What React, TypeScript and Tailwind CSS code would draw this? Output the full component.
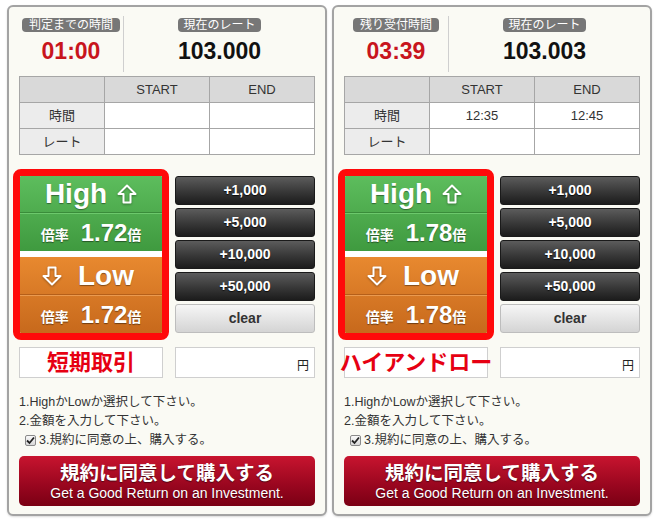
import React from "react";

interface PanelData {
  timeLabel: string;
  time: string;
  rate: string;
  start: string;
  end: string;
  mult: string;
  name: string;
}

const panels: PanelData[] = [
  { timeLabel: "判定までの時間", time: "01:00", rate: "103.000", start: "", end: "", mult: "1.72", name: "短期取引" },
  { timeLabel: "残り受付時間", time: "03:39", rate: "103.003", start: "12:35", end: "12:45", mult: "1.78", name: "ハイアンドロー" },
];

const amounts = ["+1,000", "+5,000", "+10,000", "+50,000"];

function ArrowUp() {
  return (
    <svg width="20" height="20" viewBox="0 0 20 20" className="drop-shadow-[0_1px_1px_rgba(0,0,0,0.35)]">
      <path d="M10 1.5 L18.5 10 L13.5 10 L13.5 18.5 L6.5 18.5 L6.5 10 L1.5 10 Z" fill="none" stroke="#fff" strokeWidth="2" strokeLinejoin="round" />
    </svg>
  );
}

function ArrowDown() {
  return (
    <svg width="20" height="20" viewBox="0 0 20 20" className="drop-shadow-[0_1px_1px_rgba(0,0,0,0.35)]">
      <path d="M10 18.5 L18.5 10 L13.5 10 L13.5 1.5 L6.5 1.5 L6.5 10 L1.5 10 Z" fill="none" stroke="#fff" strokeWidth="2" strokeLinejoin="round" />
    </svg>
  );
}

function RateRow({ mult }: { mult: string }) {
  return (
    <div className="h-[37px] flex items-center justify-center text-white font-bold [text-shadow:0_1px_1px_rgba(0,0,0,0.45)]">
      <span className="text-[14px] mr-[12px] mt-[6px]">倍率</span>
      <span className="text-[24px] leading-none">{mult}</span>
      <span className="text-[14px] mt-[6px]">倍</span>
    </div>
  );
}

function Panel({ p }: { p: PanelData }) {
  return (
    <div className="w-[320px] h-[511px] border-2 border-[#a3a3a3] rounded-[6px] bg-[#fafaf4] px-[10px] pt-[9px] shadow-[0_1px_2px_rgba(0,0,0,0.15)]">
      {/* header */}
      <div className="flex h-[56px]">
        <div className="w-[104px] flex flex-col items-center">
          <span className="mt-[2px] h-[14px] px-[7px] rounded-[4px] bg-[#777] text-white text-[12px] leading-[14px]">{p.timeLabel}</span>
          <span className="mt-[6px] text-[23px] leading-[26px] font-bold text-[#c8151d]">{p.time}</span>
        </div>
        <div className="w-px bg-[#cfcfcf]" />
        <div className="flex-1 flex flex-col items-center">
          <span className="mt-[2px] h-[14px] px-[5px] rounded-[4px] bg-[#777] text-white text-[12px] leading-[14px]">現在のレート</span>
          <span className="mt-[6px] text-[23px] leading-[26px] font-bold text-[#111]">{p.rate}</span>
        </div>
      </div>

      {/* table */}
      <table className="mt-[4px] w-full border-collapse text-[13px] text-[#333] table-fixed">
        <tbody>
          <tr className="h-[26px] bg-[#d9d9d9]">
            <td className="w-[85px] border border-[#a6a6a6]" />
            <td className="w-[105px] border border-[#a6a6a6] text-center">START</td>
            <td className="border border-[#a6a6a6] text-center">END</td>
          </tr>
          <tr className="h-[26px]">
            <td className="border border-[#a6a6a6] bg-[#ececec] text-center">時間</td>
            <td className="border border-[#a6a6a6] bg-white text-center">{p.start}</td>
            <td className="border border-[#a6a6a6] bg-white text-center">{p.end}</td>
          </tr>
          <tr className="h-[26px]">
            <td className="border border-[#a6a6a6] bg-[#ececec] text-center">レート</td>
            <td className="border border-[#a6a6a6] bg-white" />
            <td className="border border-[#a6a6a6] bg-white" />
          </tr>
        </tbody>
      </table>

      {/* high / low + amounts */}
      <div className="mt-[14px] flex gap-[12px]">
        <div className="w-[144px]">
          <div className="-mx-[6px] border-[7px] border-[#ff0a0a] rounded-[8px] bg-white overflow-hidden">
            <div className="bg-gradient-to-b from-[#5dbd5d] to-[#3f9a3f]">
              <div className="h-[37px] flex items-center justify-center gap-[10px] border-b border-[#3a8c3a] text-white font-bold text-[28px] leading-none [text-shadow:0_1px_1px_rgba(0,0,0,0.4)]">
                <span>High</span>
                <ArrowUp />
              </div>
              <div className="border-t border-[#6cc86c]">
                <RateRow mult={p.mult} />
              </div>
            </div>
            <div className="h-[6px] bg-white" />
            <div className="bg-gradient-to-b from-[#e8892f] to-[#c7691c]">
              <div className="h-[38px] flex items-center justify-center gap-[16px] pr-[6px] border-b border-[#b55f19] text-white font-bold text-[28px] leading-none [text-shadow:0_1px_1px_rgba(0,0,0,0.4)]">
                <ArrowDown />
                <span>Low</span>
              </div>
              <div className="border-t border-[#eb9a4f]">
                <RateRow mult={p.mult} />
              </div>
            </div>
          </div>
        </div>
        <div className="flex-1 pt-[7px] flex flex-col gap-[3px]">
          {amounts.map((a) => (
            <div
              key={a}
              className="h-[29px] rounded-[3px] border border-[#1a1a1a] bg-gradient-to-b from-[#5c5c5c] to-[#1c1c1c] flex items-center justify-center text-white font-bold text-[14px] [text-shadow:0_1px_1px_rgba(0,0,0,0.8)]"
            >
              {a}
            </div>
          ))}
          <div className="h-[29px] rounded-[3px] border border-[#bdbdbd] bg-gradient-to-b from-[#f6f6f6] to-[#d4d4d4] flex items-center justify-center text-[#333] font-bold text-[14px]">
            clear
          </div>
        </div>
      </div>

      {/* name + amount input */}
      <div className="mt-[7px] flex gap-[12px]">
        <div className="w-[144px] h-[31px] border border-[#cfcfcf] bg-white flex items-center justify-center whitespace-nowrap text-[22px] leading-none font-bold text-[#e60012]">
          {p.name}
        </div>
        <div className="flex-1 h-[31px] border border-[#cfcfcf] bg-white flex items-end justify-end pr-[5px] pb-[5px] text-[12px] leading-none text-[#222]">
          円
        </div>
      </div>

      {/* instructions */}
      <div className="mt-[15px] text-[12.5px] leading-[19px] text-[#333]">
        <div>1.HighかLowか選択して下さい。</div>
        <div>2.金額を入力して下さい。</div>
        <div className="flex items-center">
          <span className="ml-[6px] mr-[3px] w-[11px] h-[11px] border border-[#8a8a8a] rounded-[2px] bg-gradient-to-b from-[#fafafa] to-[#d8d8d8] flex items-center justify-center">
            <svg width="9" height="9" viewBox="0 0 9 9">
              <path d="M1 4.5 L3.5 7 L8 1.5" fill="none" stroke="#222" strokeWidth="1.8" />
            </svg>
          </span>
          <span>3.規約に同意の上、購入する。</span>
        </div>
      </div>

      {/* purchase */}
      <div className="mt-[6px] h-[50px] rounded-[5px] bg-gradient-to-b from-[#c8142f] to-[#7a0014] flex flex-col items-center justify-center text-white [text-shadow:0_1px_1px_rgba(0,0,0,0.5)]">
        <span className="text-[19.5px] leading-[22px] font-bold">規約に同意して購入する</span>
        <span className="text-[14px] leading-[16px] mt-[1px]">Get a Good Return on an Investment.</span>
      </div>
    </div>
  );
}

export default function App() {
  return (
    <div className="w-[660px] h-[519px] bg-white flex gap-[5px] pl-[7px] pt-[5px] font-['Liberation_Sans','Noto_Sans_CJK_JP',sans-serif]">
      {panels.map((p) => (
        <Panel key={p.time} p={p} />
      ))}
    </div>
  );
}
